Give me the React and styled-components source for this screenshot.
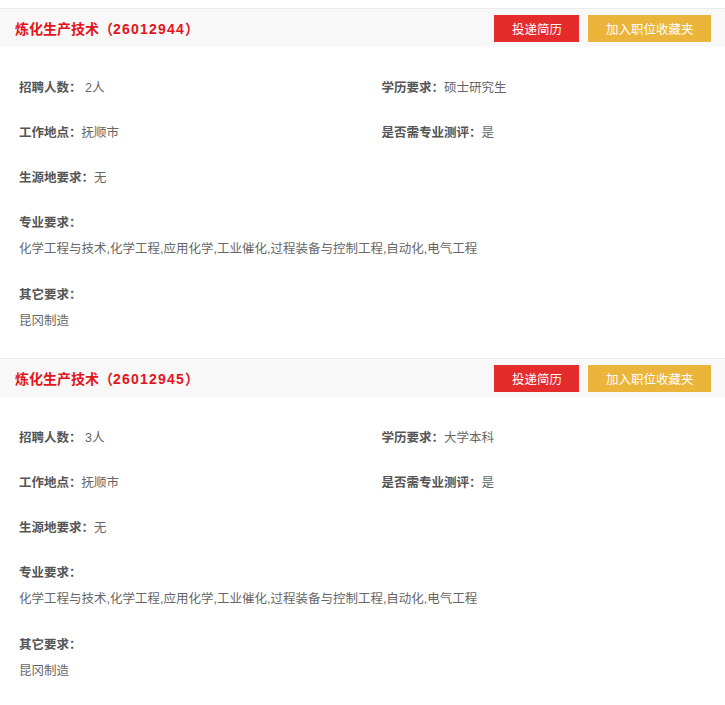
import styled, { createGlobalStyle } from "styled-components";

const GlobalStyle = createGlobalStyle`
  body {
    margin: 0;
    padding-top: 8px;
    background: #fff;
    font-family: "Liberation Sans", "Noto Sans CJK SC", sans-serif;
  }
`;

const jobs = [
  {
    id: "26012944",
    name: "炼化生产技术",
    count: "2人",
    degree: "硕士研究生",
    place: "抚顺市",
    test: "是",
    origin: "无",
    major: "化学工程与技术,化学工程,应用化学,工业催化,过程装备与控制工程,自动化,电气工程",
    other: "昆冈制造",
  },
  {
    id: "26012945",
    name: "炼化生产技术",
    count: "3人",
    degree: "大学本科",
    place: "抚顺市",
    test: "是",
    origin: "无",
    major: "化学工程与技术,化学工程,应用化学,工业催化,过程装备与控制工程,自动化,电气工程",
    other: "昆冈制造",
  },
];

const App = () => {
  return (
    <>
      <GlobalStyle />
      <List>
        {jobs.map((job) => (
          <Card key={job.id}>
            <Header>
              <Title>{job.name}（<Code>{job.id}</Code>）</Title>
              <Actions>
                <ActionButton $color="#e42c2c">投递简历</ActionButton>
                <ActionButton $color="#ebb43a">加入职位收藏夹</ActionButton>
              </Actions>
            </Header>
            <Body>
              <Grid>
                <Item><Label>招聘人数：</Label> {job.count}</Item>
                <Item><Label>学历要求：</Label>{job.degree}</Item>
                <Item><Label>工作地点：</Label>{job.place}</Item>
                <Item><Label>是否需专业测评：</Label>{job.test}</Item>
                <Item><Label>生源地要求：</Label>{job.origin}</Item>
              </Grid>
              <Block>
                <Label>专业要求：</Label>
                <Value>{job.major}</Value>
              </Block>
              <Block>
                <Label>其它要求：</Label>
                <Value>{job.other}</Value>
              </Block>
            </Body>
          </Card>
        ))}
      </List>
    </>
  );
};

const List = styled.div`
  width: 725px;
`;

const Card = styled.div`
  border-top: 1px solid #ebebeb;
`;

const Header = styled.div`
  height: 38px;
  background: #f8f8f8;
  display: flex;
  align-items: center;
  justify-content: space-between;
  padding: 0 14px 0 15px;
`;

const Title = styled.div`
  color: #e3141c;
  font-size: 14px;
  font-weight: bold;
`;

const Code = styled.span`
  letter-spacing: 1.2px;
`;

const Actions = styled.div`
  display: flex;
  gap: 9px;
`;

const ActionButton = styled.button`
  border: none;
  height: 27px;
  padding: 0 17.5px;
  background: ${(p) => p.$color};
  color: #fff;
  font-family: inherit;
  font-size: 12.5px;
  cursor: pointer;
`;

const Body = styled.div`
  padding: 31px 0 1px;
  font-size: 12.5px;
  color: #666;
  line-height: 20px;
`;

const Grid = styled.div`
  display: grid;
  grid-template-columns: 1fr 1fr;
  row-gap: 25px;
  margin-bottom: 25px;
`;

const Item = styled.div`
  padding-left: 19px;
`;

const Label = styled.span`
  color: #555;
  font-weight: bold;
`;

const Block = styled.div`
  padding-left: 19px;
  margin-bottom: 26px;
  display: flex;
  flex-direction: column;
  gap: 6px;
`;

const Value = styled.div``;

export default App;
